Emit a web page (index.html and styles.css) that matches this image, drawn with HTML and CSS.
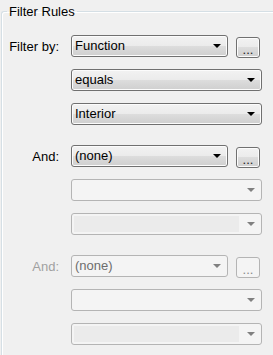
FILE: index.html
```html
<!DOCTYPE html>
<html lang="en">
<head>
    <meta charset="UTF-8">
    <title>Filter Rules</title>
    <link rel="stylesheet" href="styles.css">
</head>
<body>
    <!-- Filter rules group box -->
    <fieldset class="rules">
        <legend>Filter Rules</legend>

        <div class="group">
            <span class="lbl">Filter by:</span>
            <div class="combo">Function</div>
            <button class="more">...</button>
            <div class="combo wide">equals</div>
            <div class="combo wide">Interior</div>
        </div>

        <div class="group">
            <span class="lbl">And:</span>
            <div class="combo">(none)</div>
            <button class="more">...</button>
            <div class="combo wide empty"></div>
            <div class="combo wide empty edit"><span class="field"></span></div>
        </div>

        <div class="group off">
            <span class="lbl">And:</span>
            <div class="combo">(none)</div>
            <button class="more">...</button>
            <div class="combo wide empty"></div>
            <div class="combo wide empty edit"><span class="field"></span></div>
        </div>
    </fieldset>
</body>
</html>
```

FILE: styles.css
```css
/* General */
body {
    margin: 0;
    width: 273px;
    height: 355px;
    overflow: hidden;
    background: #f0f0f0;
    font-family: "Liberation Sans", Arial, sans-serif;
    font-size: 13px;
    color: #000;
}

/* Group box (right and bottom edges lie outside the view) */
.rules {
    width: 272px;
    height: 351px;
    margin: 4px 0 0 1px;
    padding: 16px 0 0 0;
    border: 1px solid #d5dfe5;
    border-right: none;
    border-bottom: none;
    border-radius: 3px 0 0 0;
    box-shadow: inset 1px 1px 0 #fff;
    box-sizing: border-box;
    min-width: 0;
    overflow: hidden;
}

.rules legend {
    margin-left: 5px;
    padding: 0 2px;
    line-height: 15px;
}

/* Rule rows */
.group {
    display: grid;
    grid-template-columns: 69px 157px 8px 26px;
    grid-auto-rows: 22px;
    row-gap: 12px;
    margin-bottom: 20px;
}

.lbl {
    grid-column: 1;
    align-self: center;
    text-align: right;
    padding-right: 12px;
}

/* Combo boxes */
.combo {
    grid-column: 2;
    position: relative;
    height: 22px;
    box-sizing: border-box;
    padding: 0 0 0 3px;
    line-height: 20px;
    border: 1px solid #707070;
    border-radius: 3px;
    background: linear-gradient(#f2f2f2 0%, #ebebeb 50%, #dddddd 50%, #cfcfcf 100%);
    box-shadow: inset 0 0 0 1px #fcfcfc;
}

.combo::after {
    content: "";
    position: absolute;
    right: 6px;
    top: 8px;
    border-top: 4px solid #000;
    border-left: 4px solid transparent;
    border-right: 4px solid transparent;
}

.combo.wide {
    grid-column: 2 / 5;
}

.combo.empty {
    border-color: #b4b4b4;
    background: #f4f4f4;
    box-shadow: none;
}

.combo.empty::after {
    border-top-color: #808080;
}

.combo.edit .field {
    position: absolute;
    left: 2px;
    top: 2px;
    bottom: 2px;
    right: 22px;
    background: #ebebeb;
}

/* "..." button */
.more {
    grid-column: 4;
    width: 24px;
    height: 21px;
    margin-top: 2px;
    padding: 3px 0 0;
    font: inherit;
    line-height: 15px;
    color: #1e1e1e;
    border: 1px solid #707070;
    border-radius: 3px;
    background: linear-gradient(#f2f2f2 0%, #ebebeb 50%, #dddddd 50%, #cfcfcf 100%);
    box-shadow: inset 0 0 0 1px #fcfcfc;
}

/* Disabled group */
.group.off .lbl {
    color: #a0a0a0;
}

.group.off .combo {
    color: #6d6d6d;
    border-color: #b4b4b4;
    background: #f4f4f4;
    box-shadow: none;
}

.group.off .combo::after {
    border-top-color: #808080;
}

.group.off .more {
    color: #8a8a8a;
    border-color: #b4b4b4;
    background: #f4f4f4;
    box-shadow: none;
}
```
